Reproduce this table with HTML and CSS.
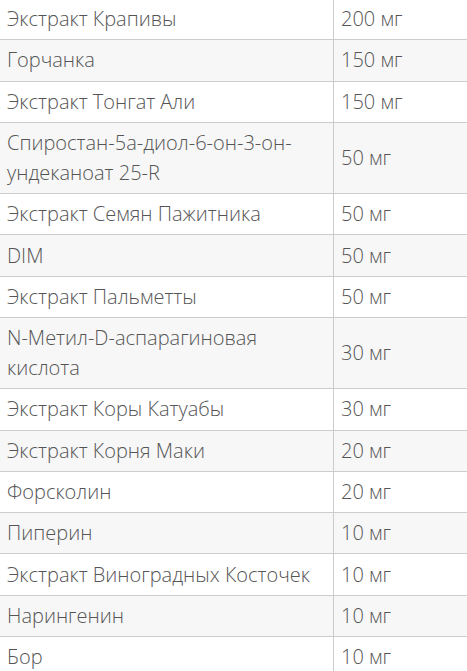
FILE: index.html
```html
<!DOCTYPE html>
<html lang="ru">
<head>
<meta charset="utf-8">
<link rel="stylesheet" href="styles.css">
</head>
<body>
<table class="comp">
<tbody>
<tr><td class="name">Экстракт Крапивы</td><td class="dose">200 мг</td></tr>
<tr><td class="name">Горчанка</td><td class="dose">150 мг</td></tr>
<tr><td class="name">Экстракт Тонгат Али</td><td class="dose">150 мг</td></tr>
<tr><td class="name">Спиростан-5а-диол-6-он-3-он-ундеканоат 25-R</td><td class="dose">50 мг</td></tr>
<tr><td class="name">Экстракт Семян Пажитника</td><td class="dose">50 мг</td></tr>
<tr><td class="name">DIM</td><td class="dose">50 мг</td></tr>
<tr><td class="name">Экстракт Пальметты</td><td class="dose">50 мг</td></tr>
<tr><td class="name">N-Метил-D-аспарагиновая кислота</td><td class="dose">30 мг</td></tr>
<tr><td class="name">Экстракт Коры Катуабы</td><td class="dose">30 мг</td></tr>
<tr><td class="name">Экстракт Корня Маки</td><td class="dose">20 мг</td></tr>
<tr><td class="name">Форсколин</td><td class="dose">20 мг</td></tr>
<tr><td class="name">Пиперин</td><td class="dose">10 мг</td></tr>
<tr><td class="name">Экстракт Виноградных Косточек</td><td class="dose">10 мг</td></tr>
<tr><td class="name">Нарингенин</td><td class="dose">10 мг</td></tr>
<tr><td class="name">Бор</td><td class="dose">10 мг</td></tr>
</tbody>
</table>
</body>
</html>
```
FILE: styles.css
```css
html, body {
  margin: 0;
  padding: 0;
  background: #fff;
}
.comp {
  width: 100%;
  border-collapse: collapse;
  margin-top: -2px;
  font-family: "Open Sans", sans-serif;
  font-weight: 300;
  font-size: 20px;
  line-height: 30px;
  color: #555;
}
.comp td {
  padding: 5.15px 7px;
  border: 1px solid #ccc;
  vertical-align: middle;
  text-align: left;
}
.comp tr td:first-child { border-left: none; }
.comp tr td:last-child { border-right: none; }
.comp tr:nth-child(even) td { background: #f7f7f7; }
.name { width: 319px; }
```
